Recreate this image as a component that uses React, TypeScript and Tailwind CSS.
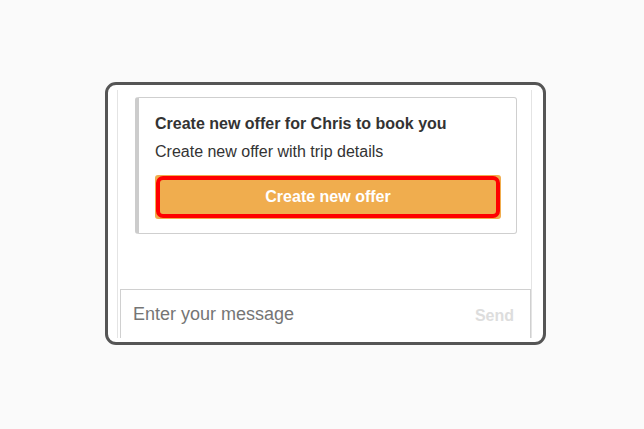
import React from "react";

export default function App() {
    const [message, setMessage] = React.useState('')

    return (
        <div
            className="w-[644px] h-[429px] bg-[#fafafa] pl-[105px] pt-[82px]"
            style={{ fontFamily: '"Liberation Sans", Arial, sans-serif' }}
        >
            <div className="w-[441px] h-[263px] border-[3px] border-[#555] rounded-[11px] bg-white pl-[9px] pr-[11px] pt-[5px] pb-[4px]">
                <div className="h-full border-x border-[#e4e4e4] flex flex-col overflow-hidden">
                    {/* offer card */}
                    <div className="ml-[17px] mr-[14px] mt-[7px] border border-[#cfcfcf] border-l-4 border-l-[#cccccc] rounded-[3px] pl-[16px] pr-[15px] pt-[16px] pb-[14px] text-[#333]">
                        <h3 className="text-[16px] font-bold leading-[20px]">Create new offer for Chris to book you</h3>
                        <p className="text-[16px] leading-[20px] mt-[8px]">Create new offer with trip details</p>
                        <button
                            type="button"
                            className="mt-[13px] w-full h-[44px] bg-[#f0ad4e] rounded-[3px] p-px"
                        >
                            <div className="h-full w-full border-[4px] border-[#ff0000] rounded-[7px] flex items-center justify-center text-white font-bold text-[16px]">
                                Create new offer
                            </div>
                        </button>
                    </div>

                    {/* message box */}
                    <div className="mt-auto ml-[2px] h-[49px] border-t border-x border-[#d0d0d0] flex items-start pt-[13px] pl-[12px] pr-[16px]">
                        <input
                            value={message}
                            onChange={(e) => setMessage(e.target.value)}
                            placeholder="Enter your message"
                            className="flex-1 outline-0 text-[18px] leading-[22px] text-[#333] placeholder:text-[#757575] bg-transparent"
                        />
                        <span className="text-[16px] font-bold text-[#dddddd] leading-[22px] pt-[2px]">Send</span>
                    </div>
                </div>
            </div>
        </div>
    )
}
